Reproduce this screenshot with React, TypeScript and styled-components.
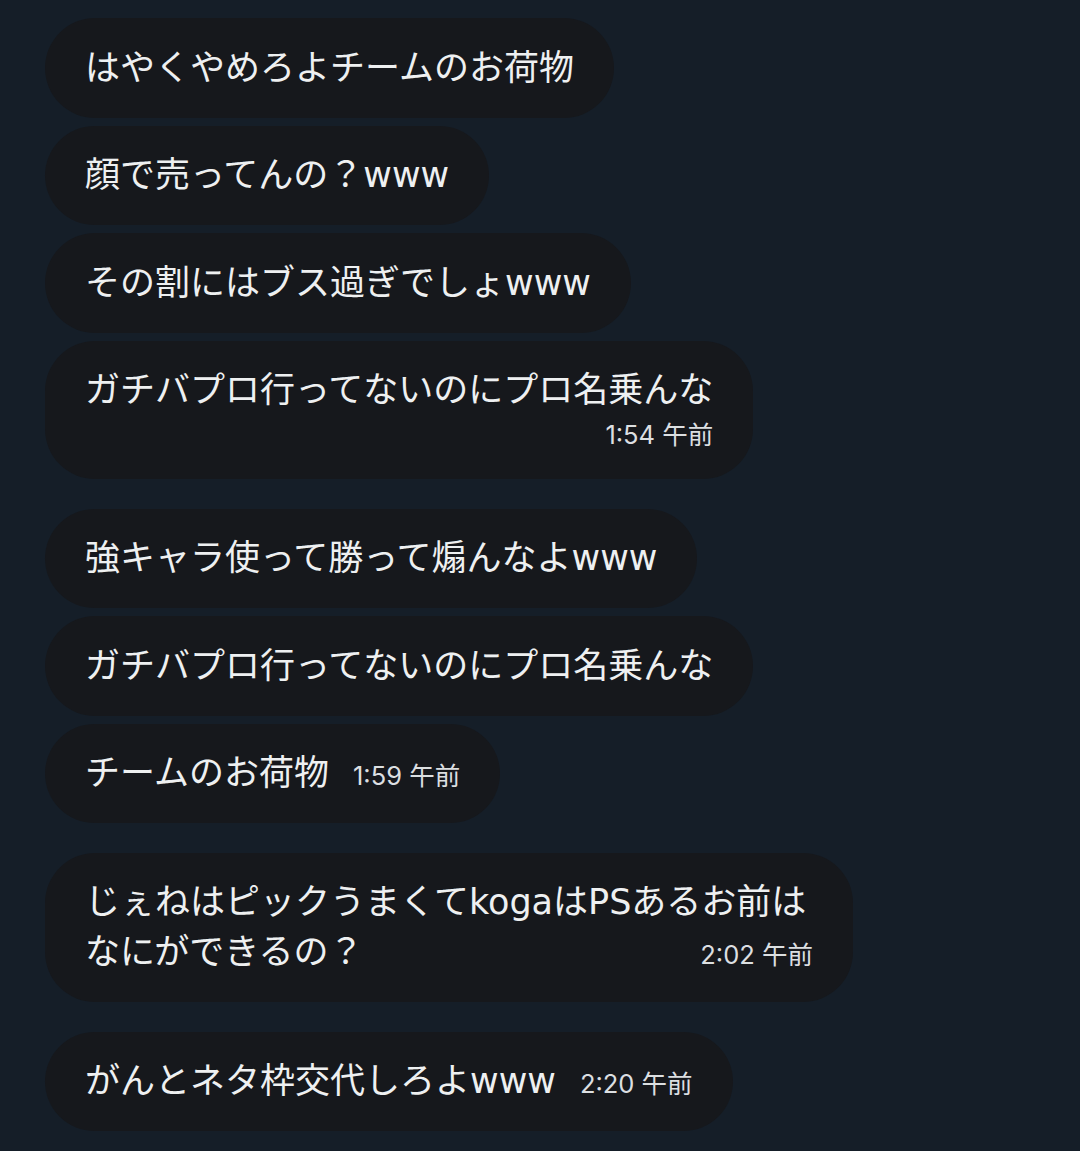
import React from "react";
import styled, { createGlobalStyle } from "styled-components";

const Global = createGlobalStyle`
  html, body {
    margin: 0;
    padding: 0;
    background: #151e28;
  }
  body {
    font-family: "DejaVu Sans", "Noto Sans CJK JP", sans-serif;
    color: #e7e9ea;
  }
`;

const Page = styled.div`
  min-height: 1151px;
  box-sizing: border-box;
  padding: 18px 0 0 45px;
  display: flex;
  flex-direction: column;
  gap: 29.5px;
`;

const Group = styled.div`
  display: flex;
  flex-direction: column;
  align-items: flex-start;
  gap: 8px;
`;

const Bubble = styled.div<{ $wide?: boolean }>`
  display: flex;
  flex-direction: column;
  box-sizing: border-box;
  width: ${(p) => (p.$wide ? "808px" : "auto")};
  max-width: 808px;
  background: #16181c;
  border-radius: 50px;
  padding: 24.75px 40px 24.75px 40px;
  font-size: 35px;
  line-height: 50px;
`;

const Line = styled.div<{ $spread?: boolean }>`
  display: flex;
  align-items: baseline;
  justify-content: ${(p) => (p.$spread ? "space-between" : "flex-start")};
  gap: 24px;
  height: 50px;
  white-space: nowrap;
`;

const Text = styled.span`
  color: #eef0f1;
`;

const Time = styled.span<{ $below?: boolean }>`
  font-family: "Inter", "Noto Sans CJK JP", sans-serif;
  font-size: 25.5px;
  line-height: ${(p) => (p.$below ? "39px" : "30px")};
  color: #dcdfe1;
  white-space: nowrap;
  align-self: ${(p) => (p.$below ? "flex-end" : "auto")};
`;

type Msg = {
  lines: string[];
  time?: string;
  mode?: "inline" | "below" | "last";
};

const groups: Msg[][] = [
  [
    { lines: ["はやくやめろよチームのお荷物"] },
    { lines: ["顔で売ってんの？www"] },
    { lines: ["その割にはブス過ぎでしょwww"] },
    { lines: ["ガチバプロ行ってないのにプロ名乗んな"], time: "1:54 午前", mode: "below" },
  ],
  [
    { lines: ["強キャラ使って勝って煽んなよwww"] },
    { lines: ["ガチバプロ行ってないのにプロ名乗んな"] },
    { lines: ["チームのお荷物"], time: "1:59 午前", mode: "inline" },
  ],
  [
    {
      lines: ["じぇねはピックうまくてkogaはPSあるお前は", "なにができるの？"],
      time: "2:02 午前",
      mode: "last",
    },
  ],
  [{ lines: ["がんとネタ枠交代しろよwww"], time: "2:20 午前", mode: "inline" }],
];

function Message({ m }: { m: Msg }) {
  const last = m.lines.length - 1;
  return (
    <Bubble $wide={m.lines.length > 1}>
      {m.lines.map((l, i) => {
        const withTime = i === last && (m.mode === "inline" || m.mode === "last");
        return (
          <Line key={i} $spread={m.mode === "last"}>
            <Text>{l}</Text>
            {withTime && <Time>{m.time}</Time>}
          </Line>
        );
      })}
      {m.mode === "below" && <Time $below>{m.time}</Time>}
    </Bubble>
  );
}

export default function App() {
  return (
    <>
      <Global />
      <Page>
        {groups.map((g, gi) => (
          <Group key={gi}>
            {g.map((m, mi) => (
              <Message key={mi} m={m} />
            ))}
          </Group>
        ))}
      </Page>
    </>
  );
}
